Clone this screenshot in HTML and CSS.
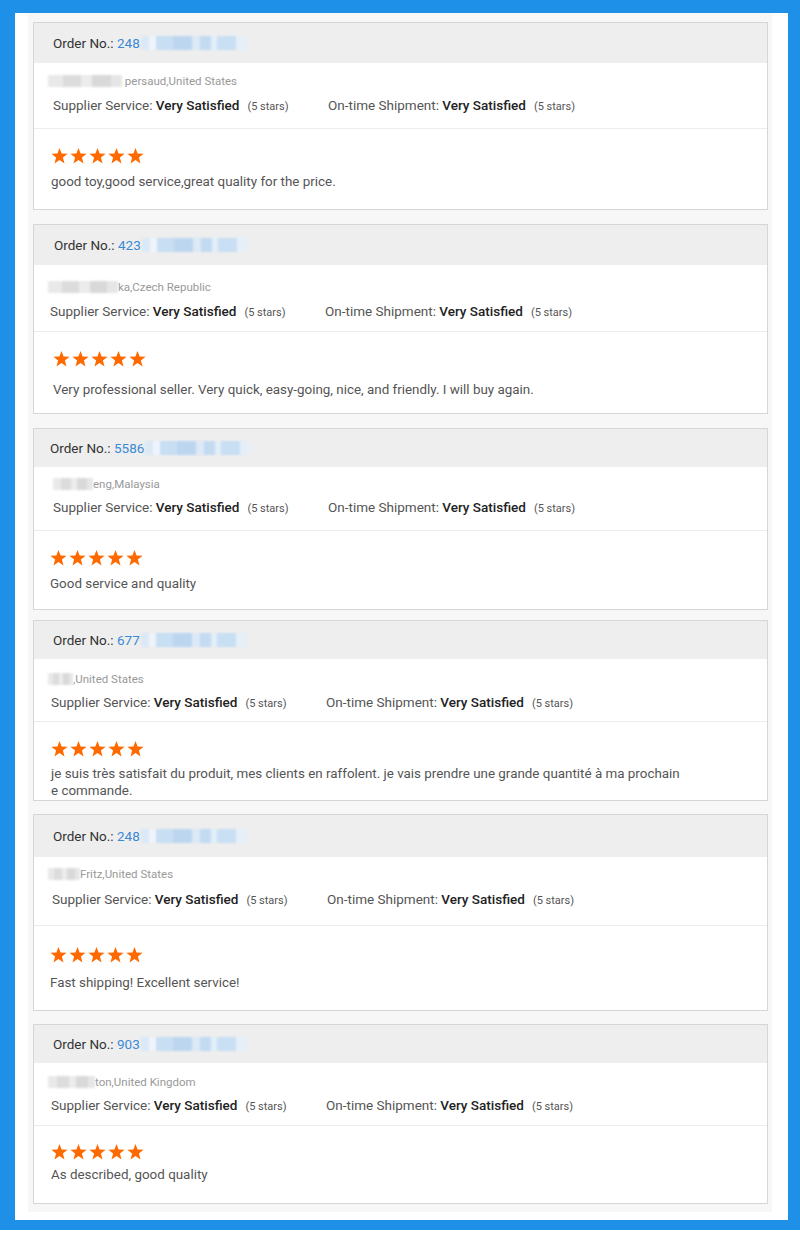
FILE: index.html
```html
<!DOCTYPE html>
<html>
<head>
<meta charset="utf-8">
<link rel="stylesheet" href="styles.css">
</head>
<body>
<div class="frame">
  <div class="panel">

    <section class="card c1">
      <div class="header">Order No.: <span class="num">248</span><span class="blur-num"></span></div>
      <div class="info">
        <div class="name"><span class="blur-name"></span> persaud,United States</div>
        <div class="supp">
          <span class="grp">Supplier Service: <b>Very Satisfied</b><small>(5 stars)</small></span>
          <span class="grp">On-time Shipment: <b>Very Satisfied</b><small>(5 stars)</small></span>
        </div>
      </div>
      <div class="review">
        <svg class="stars" width="96" height="16" viewBox="0 0 96 16"><g fill="#ff6a00"><polygon id="s" points="8.5,0 10.6,5.6 16.6,5.8 11.9,9.6 13.5,15.5 8.5,12.1 3.5,15.5 5.1,9.6 0.4,5.8 6.4,5.6"/><use href="#s" x="19"/><use href="#s" x="38"/><use href="#s" x="57"/><use href="#s" x="76"/></g></svg>
        <p class="text">good toy,good service,great quality for the price.</p>
      </div>
    </section>

    <section class="card c2">
      <div class="header">Order No.: <span class="num">423</span><span class="blur-num"></span></div>
      <div class="info">
        <div class="name"><span class="blur-name"></span>ka,Czech Republic</div>
        <div class="supp">
          <span class="grp">Supplier Service: <b>Very Satisfied</b><small>(5 stars)</small></span>
          <span class="grp">On-time Shipment: <b>Very Satisfied</b><small>(5 stars)</small></span>
        </div>
      </div>
      <div class="review">
        <svg class="stars" width="96" height="16" viewBox="0 0 96 16"><g fill="#ff6a00"><polygon id="s2" points="8.5,0 10.6,5.6 16.6,5.8 11.9,9.6 13.5,15.5 8.5,12.1 3.5,15.5 5.1,9.6 0.4,5.8 6.4,5.6"/><use href="#s2" x="19"/><use href="#s2" x="38"/><use href="#s2" x="57"/><use href="#s2" x="76"/></g></svg>
        <p class="text">Very professional seller. Very quick, easy-going, nice, and friendly. I will buy again.</p>
      </div>
    </section>

    <section class="card c3">
      <div class="header">Order No.: <span class="num">5586</span><span class="blur-num"></span></div>
      <div class="info">
        <div class="name"><span class="blur-name"></span>eng,Malaysia</div>
        <div class="supp">
          <span class="grp">Supplier Service: <b>Very Satisfied</b><small>(5 stars)</small></span>
          <span class="grp">On-time Shipment: <b>Very Satisfied</b><small>(5 stars)</small></span>
        </div>
      </div>
      <div class="review">
        <svg class="stars" width="96" height="16" viewBox="0 0 96 16"><g fill="#ff6a00"><polygon id="s3" points="8.5,0 10.6,5.6 16.6,5.8 11.9,9.6 13.5,15.5 8.5,12.1 3.5,15.5 5.1,9.6 0.4,5.8 6.4,5.6"/><use href="#s3" x="19"/><use href="#s3" x="38"/><use href="#s3" x="57"/><use href="#s3" x="76"/></g></svg>
        <p class="text">Good service and quality</p>
      </div>
    </section>

    <section class="card c4">
      <div class="header">Order No.: <span class="num">677</span><span class="blur-num"></span></div>
      <div class="info">
        <div class="name"><span class="blur-name"></span>,United States</div>
        <div class="supp">
          <span class="grp">Supplier Service: <b>Very Satisfied</b><small>(5 stars)</small></span>
          <span class="grp">On-time Shipment: <b>Very Satisfied</b><small>(5 stars)</small></span>
        </div>
      </div>
      <div class="review">
        <svg class="stars" width="96" height="16" viewBox="0 0 96 16"><g fill="#ff6a00"><polygon id="s4" points="8.5,0 10.6,5.6 16.6,5.8 11.9,9.6 13.5,15.5 8.5,12.1 3.5,15.5 5.1,9.6 0.4,5.8 6.4,5.6"/><use href="#s4" x="19"/><use href="#s4" x="38"/><use href="#s4" x="57"/><use href="#s4" x="76"/></g></svg>
        <p class="text">je suis très satisfait du produit, mes clients en raffolent. je vais prendre une grande quantité à ma prochain<br>e commande.</p>
      </div>
    </section>

    <section class="card c5">
      <div class="header">Order No.: <span class="num">248</span><span class="blur-num"></span></div>
      <div class="info">
        <div class="name"><span class="blur-name"></span>Fritz,United States</div>
        <div class="supp">
          <span class="grp">Supplier Service: <b>Very Satisfied</b><small>(5 stars)</small></span>
          <span class="grp">On-time Shipment: <b>Very Satisfied</b><small>(5 stars)</small></span>
        </div>
      </div>
      <div class="review">
        <svg class="stars" width="96" height="16" viewBox="0 0 96 16"><g fill="#ff6a00"><polygon id="s5" points="8.5,0 10.6,5.6 16.6,5.8 11.9,9.6 13.5,15.5 8.5,12.1 3.5,15.5 5.1,9.6 0.4,5.8 6.4,5.6"/><use href="#s5" x="19"/><use href="#s5" x="38"/><use href="#s5" x="57"/><use href="#s5" x="76"/></g></svg>
        <p class="text">Fast shipping! Excellent service!</p>
      </div>
    </section>

    <section class="card c6">
      <div class="header">Order No.: <span class="num">903</span><span class="blur-num"></span></div>
      <div class="info">
        <div class="name"><span class="blur-name"></span>ton,United Kingdom</div>
        <div class="supp">
          <span class="grp">Supplier Service: <b>Very Satisfied</b><small>(5 stars)</small></span>
          <span class="grp">On-time Shipment: <b>Very Satisfied</b><small>(5 stars)</small></span>
        </div>
      </div>
      <div class="review">
        <svg class="stars" width="96" height="16" viewBox="0 0 96 16"><g fill="#ff6a00"><polygon id="s6" points="8.5,0 10.6,5.6 16.6,5.8 11.9,9.6 13.5,15.5 8.5,12.1 3.5,15.5 5.1,9.6 0.4,5.8 6.4,5.6"/><use href="#s6" x="19"/><use href="#s6" x="38"/><use href="#s6" x="57"/><use href="#s6" x="76"/></g></svg>
        <p class="text">As described, good quality</p>
      </div>
    </section>

  </div>
</div>
</body>
</html>
```
FILE: styles.css
```css
* { box-sizing: border-box; }
html, body { margin: 0; padding: 0; background: #fff; }
body { font-family: Roboto, "Liberation Sans", Arial, sans-serif; width: 800px; height: 1236px; overflow: hidden; }

.frame {
  width: 800px;
  height: 1230px;
  background: #fff;
  border-style: solid;
  border-color: #1e90e8;
  border-width: 13px 12px 10px 15px;
  padding: 0 16px 0 13px;
}
.panel {
  height: 1199px;
  background: #f7f7f7;
  padding: 9px 0 0 5px;
}

.card {
  width: 735px;
  border: 1px solid #d6d6d6;
  background: #fff;
  overflow: hidden;
  margin-bottom: 14px;
  --hh: 40px; --hx: 19px;
  --ih: 66px; --nt: 18px; --st: 42px; --nx: 14px; --sx: 19px;
  --rh: 80px; --sc: 27px; --tc: 53px; --tx: 17px;
}

.header {
  height: var(--hh);
  background: #eeeeee;
  display: flex;
  align-items: center;
  padding-left: var(--hx);
  font-size: 13.5px;
  color: #333;
  white-space: pre;
}
.num { color: #3a8ad6; }
.blur-num {
  display: inline-block;
  width: 106px;
  height: 14px;
  margin-left: 1px;
  background: linear-gradient(90deg, #dbe9f6 0 8%, #eef4fb 8% 14%, #c8def2 14% 30%, #bcd6f0 30% 48%, #dce9f6 48% 56%, #c3daf1 56% 66%, #e3eef8 66% 72%, #c9dff3 72% 90%, #e6eff8 90% 100%);
  filter: blur(1.2px);
}

.info {
  height: var(--ih);
  border-bottom: 1px solid #ececec;
  padding-top: calc(var(--nt) - 8px);
}
.name {
  height: 16px;
  line-height: 16px;
  font-size: 11.5px;
  color: #999;
  padding-left: var(--nx);
  display: flex;
  align-items: center;
  white-space: pre;
}
.blur-name {
  display: inline-block;
  height: 12px;
  width: var(--bw, 74px);
  background: linear-gradient(90deg, #e9e9e9 0 20%, #dcdcdc 20% 45%, #ececec 45% 60%, #d9d9d9 60% 85%, #e6e6e6 85% 100%);
  filter: blur(1px);
}
.supp {
  margin-top: calc(var(--st) - var(--nt) - 18px);
  height: 20px;
  line-height: 20px;
  padding-left: var(--sx);
  font-size: 13.5px;
  color: #555;
  display: flex;
  white-space: pre;
}
.grp { display: inline-block; }
.grp:first-child { width: 275px; }
.grp b { font-weight: 500; color: #222; }
.grp small { font-size: 11px; color: #555; margin-left: 8px; }

.review {
  height: var(--rh);
  padding-top: calc(var(--sc) - 8px);
  padding-left: var(--tx);
}
.stars { display: block; height: 16px; }
.text {
  margin: calc(var(--tc) - var(--sc) - 17px) 0 0;
  font-size: 13.4px;
  line-height: 17px;
  color: #555;
}

.c1 { --bw: 74px; }
.c2 { --hx: 20px; --ih: 67px; --nt: 22px; --st: 46px; --sx: 16px; --bw: 70px; --rh: 81px; --tc: 58px; --tx: 19px; margin-bottom: 14px; }
.c3 { --hh: 38px; --hx: 16px; --ih: 64px; --nt: 17px; --st: 40px; --nx: 19px; --bw: 40px; --rh: 78px; --tc: 53px; --tx: 16px; margin-bottom: 10px; }
.c4 { --hh: 38px; --ih: 63px; --nt: 20px; --st: 43px; --sx: 17px; --bw: 25px; --rh: 78px; --tc: 52px; margin-bottom: 13px; }
.c5 { --hh: 42px; --ih: 69px; --nt: 17px; --st: 42px; --sx: 18px; --bw: 32px; --rh: 84px; --sc: 29px; --tc: 57px; --tx: 16px; margin-bottom: 13px; }
.c6 { --hh: 38px; --ih: 63px; --nt: 19px; --st: 42px; --sx: 17px; --bw: 47px; --rh: 77px; --sc: 26px; --tc: 49px; }
```
